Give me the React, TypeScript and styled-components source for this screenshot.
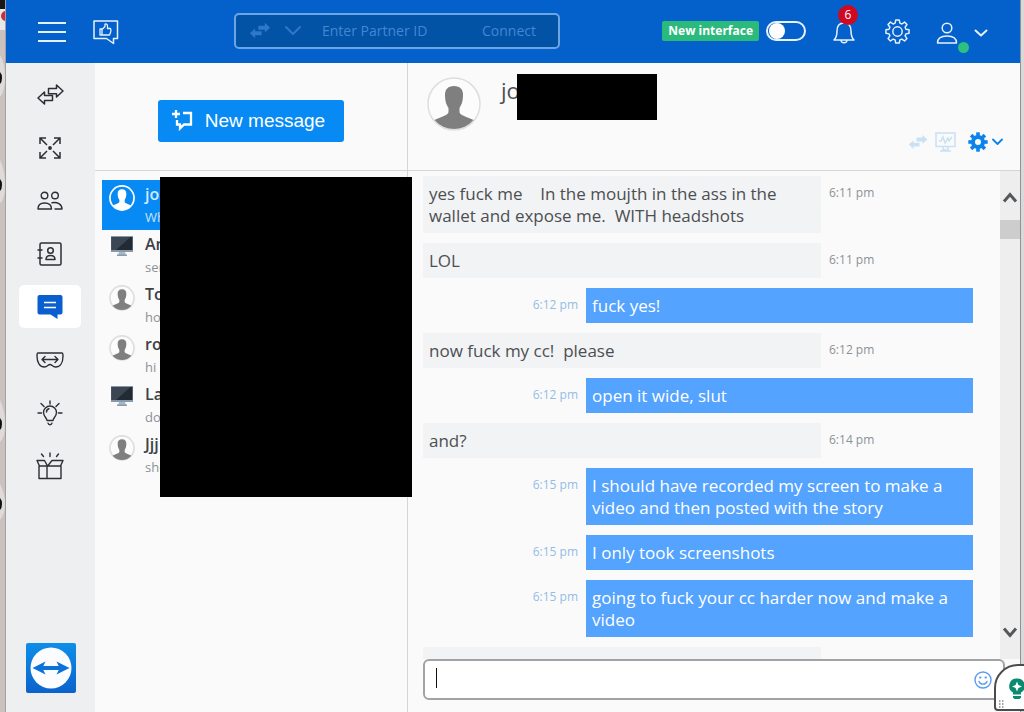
import React from "react";
import styled, { createGlobalStyle, css } from "styled-components";

const GlobalStyle = createGlobalStyle`
  * { box-sizing: border-box; }
  html, body, #root { height: 100%; }
  body {
    margin: 0;
    overflow: hidden;
    background: #fafafa;
    color: #4c4f52;
    font-family: "Open Sans", "Noto Sans", sans-serif;
    font-size: 16px;
  }
  button, input { font-family: inherit; }
`;

const ui = css`
  border: 0;
  padding: 0;
  background: none;
  display: flex;
  align-items: center;
  justify-content: center;
  cursor: pointer;
`;

const Desktop = styled.div`
  position: relative;
  display: flex;
  height: 100vh;
  overflow: hidden;
`;

const DesktopEdge = styled.div`
  flex: none;
  width: 6px;
  background: #cbc2c0;
  border-right: 1px solid #a5a1a1;
  overflow: hidden;
  svg { display: block; }
`;

const RightEdge = styled.div`
  flex: none;
  width: 4px;
  background: #d9d9d9;
  border-left: 1px solid #8f9194;
`;

const Window = styled.div`
  flex: 1;
  min-width: 0;
  display: flex;
  flex-direction: column;
`;

const TopBar = styled.header`
  flex: none;
  display: flex;
  align-items: center;
  height: 63px;
  padding: 0 31px;
  background: #0461cb;
`;

const BarButton = styled.button`
  ${ui}
  flex: none;
  position: relative;
  color: #e6f1fc;
`;

const MenuButton = styled(BarButton)`margin-right: 25px;`;

const Connector = styled.form`
  display: flex;
  align-items: center;
  flex: 0 1 326px;
  min-width: 0;
  height: 36px;
  margin: 0 auto 2px 115px;
  padding: 0 22px 0 13px;
  background: #0252a6;
  border: 2px solid #6ba5e2;
  border-radius: 5px;
  color: #2f78c8;
`;

const PartnerInput = styled.input`
  flex: 1;
  min-width: 0;
  margin-left: 20px;
  padding: 0;
  border: 0;
  outline: 0;
  background: none;
  color: #fff;
  font-size: 14px;
  &::placeholder { color: #4287d2; opacity: 1; }
`;

const ConnectButton = styled.button`
  ${ui}
  color: #4287d2;
  font-size: 14px;
`;

const Chevron = styled.svg`margin-left: 13px;`;

const Tag = styled.span`
  flex: none;
  height: 20px;
  padding: 0 6px;
  border-radius: 2px;
  background: #2cba7c;
  color: #fff;
  font-size: 12px;
  font-weight: 700;
  line-height: 20px;
  margin-bottom: 2px;
`;

const Switch = styled.input`
  appearance: none;
  flex: none;
  width: 40px;
  height: 20px;
  margin: 0 26px 2px 7px;
  border: 2px solid #e8f2fc;
  border-radius: 10px;
  &::before {
    content: "";
    display: block;
    width: 16px;
    height: 16px;
    border-radius: 50%;
    background: #fff;
    margin-left: 1px;
  }
`;

const BellButton = styled(BarButton)`margin-right: 29px;`;
const GearButton = styled(BarButton)`margin-right: 25px;`;

const Count = styled.span`
  position: absolute;
  left: 6px;
  top: -15px;
  width: 20px;
  height: 20px;
  border-radius: 50%;
  background: #cf0922;
  color: #fff;
  font-size: 12px;
  line-height: 20px;
  text-align: center;
`;

const Presence = styled.span`
  position: absolute;
  left: 23px;
  top: 22px;
  width: 11px;
  height: 11px;
  border-radius: 50%;
  background: #2cc17e;
`;

const Main = styled.div`
  flex: 1;
  min-height: 0;
  display: flex;
`;

const Sidebar = styled.nav`
  flex: none;
  width: 89px;
  display: flex;
  flex-direction: column;
  align-items: center;
  gap: 10px;
  padding: 10px 1px 19px 0;
  background: #edeff1;
`;

const NavButton = styled.button<{ $active?: boolean }>`
  ${ui}
  flex: none;
  width: 62px;
  height: 43px;
  border-radius: 5px;
  background: ${(p) => (p.$active ? "#fff" : "transparent")};
  color: ${(p) => (p.$active ? "#0a5fd0" : "#2c2f33")};
`;

const Brand = styled.div`
  margin-top: auto;
  padding-left: 2px;
  height: 50px;
  svg { display: block; }
`;

const ListPane = styled.section`
  position: relative;
  flex: none;
  width: 313px;
  border-right: 1px solid #d4d5d6;
`;

const PaneHead = styled.div`
  display: flex;
  align-items: center;
  justify-content: center;
  height: 108px;
  padding-top: 9px;
  border-bottom: 1px solid #d4d5d6;
`;

const NewMessage = styled.button`
  ${ui}
  gap: 12px;
  height: 42px;
  padding: 0 19px 0 14px;
  border-radius: 3px;
  background: #078af3;
  color: #fff;
  font-family: "Liberation Sans", Arial, sans-serif;
  font-size: 19px;
`;

const Conversations = styled.ul`
  list-style: none;
  margin: 0;
  padding: 9px 7px;
`;

const Conversation = styled.li<{ $active?: boolean }>`
  display: flex;
  gap: 10px;
  height: 50px;
  padding: 3px 0 0 6px;
  overflow: hidden;
  background: ${(p) => (p.$active ? "#078af3" : "transparent")};
  color: ${(p) => (p.$active ? "#c9e4fd" : "#8b9299")};
  font-size: 13px;
  line-height: 24px;
  strong {
    display: block;
    color: ${(p) => (p.$active ? "#d2e9fe" : "#3e4246")};
    font-size: 16px;
    font-weight: 600;
    line-height: 22px;
  }
`;

const AvatarSlot = styled.span`
  flex: none;
  display: flex;
  justify-content: center;
  width: 27px;
  padding-top: 2px;
`;

const Redaction = styled.div`
  position: absolute;
  z-index: 2;
  background: #000;
`;

const ListRedaction = styled(Redaction)`
  left: 65px;
  top: 114px;
  width: 252px;
  height: 320px;
`;

const NameRedaction = styled(Redaction)`
  left: 109px;
  top: 11px;
  width: 140px;
  height: 46px;
`;

const Chat = styled.section`
  flex: 1;
  min-width: 0;
  display: flex;
  flex-direction: column;
`;

const ChatHead = styled.div`
  position: relative;
  flex: none;
  display: flex;
  justify-content: space-between;
  height: 108px;
  padding: 14px 17px 17px 19px;
  border-bottom: 1px solid #d4d5d6;
`;

const Person = styled.div`
  display: flex;
  gap: 20px;
`;

const PersonName = styled.h1`
  margin: 0;
  font-size: 22px;
  font-weight: 400;
  line-height: 26px;
`;

const Tools = styled.div`
  display: flex;
  align-items: flex-end;
`;

const Tool = styled.button<{ $faded?: boolean }>`
  ${ui}
  height: 22px;
  margin-left: ${(p) => (p.$faded ? 7 : 12)}px;
  gap: 4px;
  color: ${(p) => (p.$faded ? "#c9e1f5" : "#0a84ec")};
`;

const Scroller = styled.div`
  flex: 1;
  min-height: 0;
  display: flex;
`;

const Messages = styled.ol`
  flex: 1;
  min-width: 0;
  list-style: none;
  margin: 0;
  padding: 5px 27px 0 15px;
  display: flex;
  flex-direction: column;
  gap: 10px;
  overflow: hidden;
`;

const Row = styled.li<{ $mine?: boolean }>`
  flex: none;
  display: flex;
  flex-direction: ${(p) => (p.$mine ? "row-reverse" : "row")};
`;

const Bubble = styled.p<{ $mine?: boolean }>`
  flex: 1;
  min-width: 0;
  min-height: 35px;
  margin: 0;
  padding: 7px 6px 6px;
  background: ${(p) => (p.$mine ? "#54a3fe" : "#f2f3f5")};
  color: ${(p) => (p.$mine ? "#fff" : "#4c4f52")};
  font-size: 17px;
  line-height: 22px;
  white-space: pre-wrap;
`;

const Time = styled.time<{ $mine?: boolean }>`
  flex: none;
  width: ${(p) => (p.$mine ? 163 : 152)}px;
  padding: 7px 8px 0;
  text-align: ${(p) => (p.$mine ? "right" : "left")};
  color: ${(p) => (p.$mine ? "#93bde6" : "#8c9298")};
  font-size: 12px;
  line-height: 20px;
`;

const Scrollbar = styled.div`
  flex: none;
  width: 20px;
  display: flex;
  flex-direction: column;
  align-items: center;
  padding: 20px 0 20px;
  background: #eeeeef;
  color: #55585b;
`;

const Thumb = styled.span`
  width: 20px;
  height: 19px;
  margin: 16px 0 auto;
  background: #cdcdcd;
`;

const Composer = styled.form`
  flex: none;
  display: flex;
  align-items: center;
  height: 41px;
  margin: 0 15px 12px 15px;
  padding: 0 11px 0 10px;
  border: 2px solid #a2a3a5;
  border-radius: 6px;
  background: #fff;
`;

const Caret = styled.span`
  width: 1px;
  height: 20px;
  margin: 0 4px 4px 1px;
  background: #111;
`;

const MessageInput = styled.input`
  flex: 1;
  min-width: 0;
  border: 0;
  outline: 0;
  background: none;
  font-size: 17px;
`;

const EmojiButton = styled.button`
  ${ui}
  color: #5c9df0;
`;

const Helper = styled.button`
  position: absolute;
  z-index: 3;
  right: -20px;
  bottom: 1px;
  width: 50px;
  height: 47px;
  padding: 0;
  border: 2px solid #4a4c4e;
  border-radius: 24px 0 0 4px;
  background: #fff;
  svg { display: block; }
`;

const line = { fill: "none", stroke: "currentColor", strokeLinecap: "round", strokeLinejoin: "round" } as const;

function Avatar({ size, active }: { size: number; active?: boolean }) {
  return (
    <svg width={size} height={size} viewBox="0 0 54 54">
      <circle cx="27" cy="27" r={size > 40 ? 26 : 25} fill={active ? "#078af3" : "#fcfcfc"} stroke={active ? "#fff" : "#dedede"} strokeWidth={size > 40 ? 1.5 : 3.5} />
      <path
        d="M27 9C21 9 18 12.500 18 17.500C18 24 19 27 21.500 31V35C21.500 38 15 39.500 7.500 43A25.500 25.500 0 0 0 46.500 43C39 39.500 32.500 38 32.500 35V31C35 27 36 24 36 17.500C36 12.500 33 9 27 9z"
        fill={active ? "#fff" : "#7f7f7f"}
      />
    </svg>
  );
}

function Monitor() {
  return (
    <svg width="24" height="22" viewBox="0 0 24 22">
      <path d="M9 17h6l1 3H8z" fill="#a9b8c6" />
      <path d="M7 19.500h10v1.500H7z" fill="#8b9cac" />
      <rect x="1" y="1" width="22" height="16" fill="#8798a9" />
      <rect x="1.500" y="2" width="21" height="13" fill="#222a34" />
      <path d="M1.500 2h19L6 15H1.500z" fill="#3b4652" />
    </svg>
  );
}

function Gear({ size, stroke }: { size: number; stroke: number }) {
  return (
    <svg width={size} height={size} viewBox="0 0 24 24" {...line} strokeWidth={stroke}>
      <path d="M10.300 1h3.400l.6 3 1.900.8 2.600-1.800 2.300 2.300-1.800 2.600.8 1.900 3 .5v3.400l-3 .6-.8 1.900 1.800 2.600-2.300 2.300-2.600-1.800-1.900.8-.6 3h-3.400l-.6-3-1.900-.8-2.600 1.800-2.300-2.300 1.800-2.600-.8-1.900-3-.6v-3.400l3-.5.8-1.900-1.800-2.600 2.300-2.300 2.600 1.800 1.900-.8z" />
      <circle cx="12" cy="12" r="4.500" />
    </svg>
  );
}

function SolidGear() {
  return (
    <svg width="20" height="20" viewBox="0 0 20 20" fill="none" stroke="currentColor">
      <circle cx="10" cy="10" r="5" strokeWidth="4" />
      {[0, 45, 90, 135, 180, 225, 270, 315].map((a) => (
        <path key={a} d="M10 .3v4" strokeWidth="3.600" transform={`rotate(${a} 10 10)`} />
      ))}
    </svg>
  );
}

function Swap({ width, outline }: { width: number; outline?: boolean }) {
  return (
    <svg width={width} height={Math.round(width * 0.78)} viewBox="0 0 27 21" fill={outline ? "none" : "currentColor"} stroke={outline ? "currentColor" : "none"} strokeWidth="1.500" strokeLinejoin="round">
      <path d="M11.500 4.500h8V1l6.500 6-6.500 6V9.700h-8z" />
      <path d="M15.500 11.500h-8V8L1 14l6.500 6v-3.500h8z" fill={outline ? "#edeff1" : "currentColor"} />
    </svg>
  );
}

const navItems: { label: string; active?: boolean; icon: React.ReactNode }[] = [
  { label: "Remote control", icon: <Swap width={27} outline /> },
  {
    label: "Expand",
    icon: (
      <svg width="22" height="22" viewBox="0 0 22 22" {...line} strokeWidth="1.500" strokeLinecap="butt" strokeLinejoin="miter">
        <path d="M8 8L1.500 1.500M1 7V1h6M14 8l6.500-6.500M15 1h6v6M8 14l-6.500 6.500M1 15v6h6M14 14l6.500 6.500M21 15v6h-6" />
        <circle cx="11" cy="11" r="1.900" fill="currentColor" stroke="none" />
      </svg>
    ),
  },
  {
    label: "Contacts",
    icon: (
      <svg width="26" height="20" viewBox="0 0 26 20" {...line} strokeWidth="1.400">
        <circle cx="7.500" cy="4.500" r="3.300" />
        <circle cx="18" cy="4.500" r="3.300" />
        <path d="M1 18c0-4 2.500-6 6.500-6s7 2 7 6zM15 11.800c5-1 10 1 10 6.200h-7" />
      </svg>
    ),
  },
  {
    label: "Address book",
    icon: (
      <svg width="26" height="24" viewBox="0 0 26 24" {...line} strokeWidth="1.500">
        <rect x="3" y="1" width="21" height="22" rx="1.500" />
        <path d="M1 8h4M1 16h4" />
        <circle cx="13.500" cy="8.500" r="2.800" />
        <path d="M9 17.500c0-3 1.500-4 4.500-4s4.500 1 4.500 4z" />
      </svg>
    ),
  },
  {
    label: "Chat",
    active: true,
    icon: (
      <svg width="26" height="24" viewBox="0 0 26 24">
        <path d="M2.500 0h21a2 2 0 0 1 2 2v15.500a2 2 0 0 1-2 2H20.500v4.500l-7-4.500h-11a2 2 0 0 1-2-2V2a2 2 0 0 1 2-2z" fill="currentColor" />
        <path d="M7 7.500h12M7 12.500h12" stroke="#fff" strokeWidth="1.500" />
      </svg>
    ),
  },
  {
    label: "Augmented reality",
    icon: (
      <svg width="28" height="16" viewBox="0 0 28 16" {...line} strokeWidth="1.400">
        <path d="M2 1h24c1 0 1 1 1 3 0 7-3 11-7.500 11-3 0-3.500-2.500-5.500-2.500S11.500 15 8.500 15C4 15 1 11 1 4c0-2 0-3 1-3z" />
        <path d="M6 7.500h16M9 4.500l-3 3 3 3M19 4.500l3 3-3 3" />
      </svg>
    ),
  },
  {
    label: "Ideas",
    icon: (
      <svg width="26" height="26" viewBox="0 0 26 26" {...line} strokeWidth="1.400">
        <path d="M10 20.500c0-2.500-3.500-4-3.500-8a6.500 6.500 0 0 1 13 0c0 4-3.500 5.500-3.500 8zM11 23.200c.5 2 3.500 2 4 0M9.500 12c0-1.500 1-2.800 2.500-3.200M13 1v3M4 3.500l3 3M22 3.500l-3 3M1 13h3.500M21.500 13H25" />
      </svg>
    ),
  },
  {
    label: "What is new",
    icon: (
      <svg width="28" height="28" viewBox="0 0 28 28" {...line} strokeWidth="1.400">
        <path d="M3 14v12.500h22V14M11 14v12.500M1 8.500h7.500l3 5.500H3.500zM12 13.500l4-5h11L24.500 14h-13M14 1v3.500M5.500 2l2 2.500M22.500 2l-2 2.500" />
      </svg>
    ),
  },
];

const conversations = [
  { name: "jo", text: "Wh", kind: "active" },
  { name: "An", text: "sen", kind: "computer" },
  { name: "To", text: "ho", kind: "person" },
  { name: "ro", text: "hi", kind: "person" },
  { name: "La", text: "do", kind: "computer" },
  { name: "Jjj", text: "she", kind: "person" },
];

const messages: { text: string; time: string; mine?: boolean }[] = [
  { text: "yes fuck me    In the moujth in the ass in the wallet and expose me.  WITH headshots", time: "6:11 pm" },
  { text: "LOL", time: "6:11 pm" },
  { text: "fuck yes!", time: "6:12 pm", mine: true },
  { text: "now fuck my cc!  please", time: "6:12 pm" },
  { text: "open it wide, slut", time: "6:12 pm", mine: true },
  { text: "and?", time: "6:14 pm" },
  { text: "I should have recorded my screen to make a video and then posted with the story", time: "6:15 pm", mine: true },
  { text: "I only took screenshots", time: "6:15 pm", mine: true },
  { text: "going to fuck your cc harder now and make a video", time: "6:15 pm", mine: true },
  { text: "", time: "" },
];

export default function App() {
  return (
    <Desktop>
      <GlobalStyle />
      <DesktopEdge>
        <svg width="6" height="712" viewBox="0 0 6 712">
          <rect width="6" height="30" fill="#e9e9e9" />
          <rect width="5" height="9" fill="#171717" />
          <circle cx="6" cy="16" r="5" fill="#c5303a" />
          <path d="M0 55q5 8 5 22t-5 20zM0 160q5 10 5 25t-5 18zM0 400q5 10 5 24t-5 18zM0 484q5 10 5 20t-5 16z" fill="#dedbda" />
          <path d="M0 72q2 2 2 6t-2 6zM0 179q2 2 2 6t-2 6zM0 418q2 2 2 6t-2 6zM0 498q2 2 2 6t-2 6z" fill="#111" />
        </svg>
      </DesktopEdge>
      <Window>
        <TopBar>
          <MenuButton aria-label="Menu">
            <svg width="30" height="24" viewBox="0 0 30 24" stroke="currentColor" strokeWidth="2">
              <path d="M1 3h28M1 12h28M1 21h28" />
            </svg>
          </MenuButton>
          <BarButton aria-label="Feedback">
            <svg width="27" height="26" viewBox="0 0 27 26" {...line} strokeWidth="1.500">
              <path d="M2 2h23.500v17.500H21.500V24.500l-7-5H2z" />
              <path d="M8 10h2v6H8zM10 10.500l3-3V5c1.500-.5 2.500.5 2.500 2v2.500h3c1 2-.2 5-1 6.500H10" strokeWidth="1.300" />
            </svg>
          </BarButton>
          <Connector>
            <Swap width={22} />
            <Chevron width="18" height="12" viewBox="0 0 18 12" {...line} strokeWidth="2"><path d="M2 2l7 7 7-7" /></Chevron>
            <PartnerInput aria-label="Partner ID" placeholder="Enter Partner ID" />
            <ConnectButton type="button">Connect</ConnectButton>
          </Connector>
          <Tag>New interface</Tag>
          <Switch type="checkbox" role="switch" aria-label="New interface" />
          <BellButton aria-label="Notifications">
            <svg width="24" height="24" viewBox="0 0 24 24" {...line} strokeWidth="1.500">
              <path d="M2 20c2-2 3-4 3-9 0-5 2.500-8 7-8s7 3 7 8c0 5 1 7 3 9zM9 20.500c.5 3 5.500 3 6 0" />
            </svg>
            <Count>6</Count>
          </BellButton>
          <GearButton aria-label="Settings"><Gear size={25} stroke={1.4} /></GearButton>
          <BarButton aria-label="Account">
            <svg width="26" height="24" viewBox="0 0 26 24" {...line} strokeWidth="1.500">
              <circle cx="12" cy="8" r="4.800" />
              <path d="M2.500 23c0-5 3.500-7 9.500-7s9.500 2 9.500 7z" />
            </svg>
            <Chevron width="15" height="10" viewBox="0 0 15 10" {...line} strokeWidth="2"><path d="M1.500 3.500l5.500 5 5.500-5" /></Chevron>
            <Presence />
          </BarButton>
        </TopBar>
        <Main>
          <Sidebar>
            {navItems.map((item) => (
              <NavButton key={item.label} aria-label={item.label} $active={item.active}>{item.icon}</NavButton>
            ))}
            <Brand>
              <svg width="50" height="50" viewBox="0 0 50 50">
                <defs>
                  <linearGradient id="brand" x1="0" y1="0" x2="0" y2="1">
                    <stop offset="0" stopColor="#0e8ee9" />
                    <stop offset="1" stopColor="#0b62cc" />
                  </linearGradient>
                </defs>
                <rect width="50" height="50" rx="2" fill="url(#brand)" />
                <circle cx="25" cy="25" r="20.500" fill="#fafcff" />
                <path d="M6.500 25l13-6.500-2.200 4.500h15.400l-2.200-4.500 13 6.500-13 6.500 2.200-4.500H17.300l2.200 4.500z" fill="#0d72d8" />
              </svg>
            </Brand>
          </Sidebar>
          <ListPane>
            <PaneHead>
              <NewMessage>
                <svg width="21" height="22" viewBox="0 0 21 22" fill="none" stroke="currentColor" strokeWidth="2.300">
                  <path d="M4 0v8M0 4h8M11 3h8v11.500h-7L8 18.500v-4H5V10" />
                </svg>
                New message
              </NewMessage>
            </PaneHead>
            <Conversations>
              {conversations.map((c) => (
                <Conversation key={c.name} $active={c.kind === "active"}>
                  <AvatarSlot>{c.kind === "computer" ? <Monitor /> : <Avatar size={26} active={c.kind === "active"} />}</AvatarSlot>
                  <div>
                    <strong>{c.name}</strong>
                    {c.text}
                  </div>
                </Conversation>
              ))}
            </Conversations>
            <ListRedaction />
          </ListPane>
          <Chat>
            <ChatHead>
              <Person>
                <Avatar size={54} />
                <PersonName>jo</PersonName>
                <NameRedaction />
              </Person>
              <Tools>
                <Tool $faded aria-label="Connect"><Swap width={20} /></Tool>
                <Tool $faded aria-label="Monitoring">
                  <svg width="21" height="20" viewBox="0 0 21 20" fill="none" stroke="currentColor" strokeWidth="1.500">
                    <path d="M1 1h19v13.500H1zM8 15v3h5v-3M5 19h11M4 9h2l2-4 2 6 3-5 1 3 3-4" />
                  </svg>
                </Tool>
                <Tool aria-label="Chat settings">
                  <SolidGear />
                  <svg width="11" height="8" viewBox="0 0 11 8" {...line} strokeWidth="1.800"><path d="M1 1.500l4.500 4.500L10 1.500" /></svg>
                </Tool>
              </Tools>
            </ChatHead>
            <Scroller>
              <Messages>
                {messages.map((m, i) => (
                  <Row key={i} $mine={m.mine}>
                    <Bubble $mine={m.mine}>{m.text}</Bubble>
                    <Time $mine={m.mine}>{m.time}</Time>
                  </Row>
                ))}
              </Messages>
              <Scrollbar>
                <svg width="16" height="13" viewBox="0 0 16 13" fill="none" stroke="currentColor" strokeWidth="3"><path d="M2 10.500l6-7 6 7" /></svg>
                <Thumb />
                <svg width="16" height="13" viewBox="0 0 16 13" fill="none" stroke="currentColor" strokeWidth="3"><path d="M2 2.500l6 7 6-7" /></svg>
              </Scrollbar>
            </Scroller>
            <Composer>
              <Caret />
              <MessageInput aria-label="Message" />
              <EmojiButton type="button" aria-label="Emoji">
                <svg width="18" height="18" viewBox="0 0 18 18" {...line} strokeWidth="1.400">
                  <circle cx="9" cy="9" r="8" />
                  <path d="M5 10.500c1 3.500 7 3.500 8 0" />
                  <path d="M6 6.500h.5M11.500 6.500h.5" strokeWidth="2" />
                </svg>
              </EmojiButton>
            </Composer>
          </Chat>
        </Main>
      </Window>
      <RightEdge />
      <Helper aria-label="Suggestions">
        <svg width="46" height="43" viewBox="0 0 46 43">
          <path d="M21 12.500a7.500 7.500 0 0 1 4 14v2h-8v-2a7.500 7.500 0 0 1 4-14z" fill="#0c8a70" />
          <path d="M21 15.500l1.400 3.600 3.600 1.400-3.600 1.400L21 25.500l-1.400-3.600-3.600-1.400 3.600-1.400z" fill="#fff" />
          <path d="M17 30h8v1.500l-1.500 1.500h-5L17 31.500z" fill="#0c8a70" />
          <path d="M3 35h1.500M6 35h1.500M3 38h1.500M6 38h1.500M3 41h1.500M6 41h1.500" stroke="#888" strokeWidth="1.500" />
        </svg>
      </Helper>
    </Desktop>
  );
}
